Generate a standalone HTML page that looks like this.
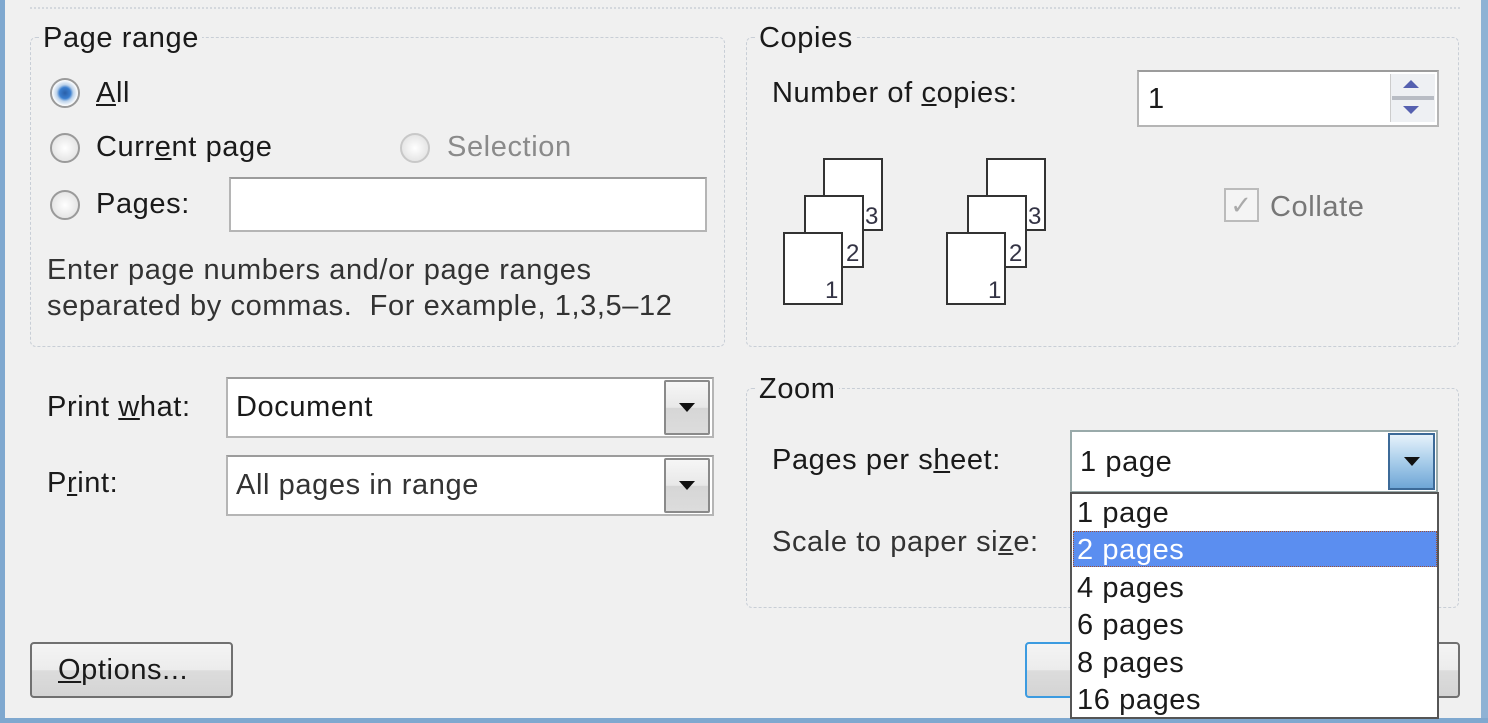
<!DOCTYPE html>
<html><head><style>
*{margin:0;padding:0;box-sizing:border-box}
body{width:1488px;height:723px;background:#f0f0f0;position:relative;overflow:hidden;font-family:"Liberation Sans",sans-serif;font-size:29px;letter-spacing:0.6px;color:#1a1a1a}
.a{position:absolute}
.t{position:absolute;line-height:30px;white-space:nowrap}
.grp{position:absolute;border:1px dashed #c8ced6;border-radius:6px}
.leg{position:absolute;background:#f0f0f0;padding:0 3px;line-height:30px}
.radio{position:absolute;width:30px;height:30px;border-radius:50%;border:2px solid #9a9a9a;background:radial-gradient(circle at 50% 50%,#fff 0,#e6e6e6 70%)}
.box{position:absolute;background:#fff;border:2px solid #b5b5b5;border-top-color:#9c9c9c}
.btn{position:absolute;width:46px;background:linear-gradient(#f6f6f6 0,#e8e8e8 50%,#d6d6d6 51%,#dcdcdc);border:2px solid #8a8a8a;border-radius:2px}
.tri{position:absolute;left:50%;top:50%;margin:-5px 0 0 -8px;border-left:8px solid transparent;border-right:8px solid transparent;border-top:9px solid #111}
.pg{position:absolute;width:60px;height:73px;background:#fff;border:2px solid #333}
.pg span{position:absolute;right:2px;bottom:0;font-size:24px;line-height:24px;color:#334}
.u{text-decoration:underline}
</style></head><body>
<div class="a" style="left:0;top:0;width:5px;height:723px;background:#7fa8cf"></div>
<div class="a" style="right:0;top:0;width:7px;height:723px;background:#8fb2d4"></div>
<div class="a" style="left:0;bottom:0;width:1488px;height:5px;background:#7fa8cf"></div>
<div class="a" style="left:30px;top:7px;width:1430px;border-top:2px dotted #d4d8dd"></div>

<div class="grp" style="left:30px;top:37px;width:695px;height:310px"></div>
<div class="leg" style="left:40px;top:23px">Page range</div>
<div class="radio" style="left:50px;top:78px;background:radial-gradient(circle,#2a5fa8 0,#3b7fd0 30%,#bcd2ea 45%,#fff 70%,#e6e6e6 100%)"></div>
<div class="t" style="left:96px;top:78px"><span class="u">A</span>ll</div>
<div class="radio" style="left:50px;top:133px"></div>
<div class="t" style="left:96px;top:132px">Curr<span class="u">e</span>nt page</div>
<div class="radio" style="left:400px;top:133px;border-color:#c8c8c8"></div>
<div class="t" style="left:447px;top:132px;color:#8a8a8a">Selection</div>
<div class="radio" style="left:50px;top:190px"></div>
<div class="t" style="left:96px;top:189px">Pa<span class="u">g</span>es:</div>
<div class="box" style="left:229px;top:177px;width:478px;height:55px"></div>
<div class="t" style="left:47px;top:255px;color:#333">Enter page numbers and/or page ranges</div>
<div class="t" style="left:47px;top:291px;color:#333">separated by commas.&nbsp; For example, 1,3,5–12</div>

<div class="grp" style="left:746px;top:37px;width:713px;height:310px"></div>
<div class="leg" style="left:756px;top:23px">Copies</div>
<div class="t" style="left:772px;top:78px">Number of <span class="u">c</span>opies:</div>
<div class="box" style="left:1137px;top:70px;width:302px;height:57px"></div>
<div class="t" style="left:1148px;top:84px">1</div>
<div class="a" style="left:1390px;top:74px;width:45px;height:48px;background:#eef0f3;border-left:1px solid #ccc"></div>
<div class="a" style="left:1403px;top:80px;border-left:8px solid transparent;border-right:8px solid transparent;border-bottom:8px solid #5560b0"></div>
<div class="a" style="left:1392px;top:96px;width:42px;height:4px;background:#b8bcc4"></div>
<div class="a" style="left:1403px;top:106px;border-left:8px solid transparent;border-right:8px solid transparent;border-top:8px solid #5560b0"></div>
<div class="pg" style="left:823px;top:158px"><span>3</span></div>
<div class="pg" style="left:804px;top:195px"><span>2</span></div>
<div class="pg" style="left:783px;top:232px"><span>1</span></div>
<div class="pg" style="left:986px;top:158px"><span>3</span></div>
<div class="pg" style="left:967px;top:195px"><span>2</span></div>
<div class="pg" style="left:946px;top:232px"><span>1</span></div>
<div class="a" style="left:1224px;top:188px;width:35px;height:34px;border:2px solid #bbb;background:#f4f4f4;color:#aaa;font-size:26px;line-height:30px;text-align:center">✓</div>
<div class="t" style="left:1270px;top:192px;color:#777">Collate</div>

<div class="t" style="left:47px;top:392px">Print <span class="u">w</span>hat:</div>
<div class="box" style="left:226px;top:377px;width:488px;height:61px"></div>
<div class="t" style="left:236px;top:392px">Document</div>
<div class="btn" style="left:664px;top:380px;height:55px"><div class="tri"></div></div>
<div class="t" style="left:47px;top:468px">P<span class="u">r</span>int:</div>
<div class="box" style="left:226px;top:455px;width:488px;height:61px"></div>
<div class="t" style="left:236px;top:470px;color:#333">All pages in range</div>
<div class="btn" style="left:664px;top:458px;height:55px"><div class="tri"></div></div>

<div class="grp" style="left:746px;top:388px;width:713px;height:220px"></div>
<div class="leg" style="left:756px;top:374px">Zoom</div>
<div class="t" style="left:772px;top:445px">Pages per s<span class="u">h</span>eet:</div>
<div class="t" style="left:772px;top:527px;color:#333">Scale to paper si<span class="u">z</span>e:</div>

<div class="a" style="left:30px;top:642px;width:203px;height:56px;border:2px solid #707070;border-radius:4px;background:linear-gradient(#f4f4f4 0,#ececec 50%,#dcdcdc 51%,#d4d4d4)"></div>
<div class="t" style="left:58px;top:655px"><span class="u">O</span>ptions...</div>
<div class="a" style="left:1025px;top:642px;width:100px;height:56px;border:2px solid #3c9be0;border-radius:4px;background:linear-gradient(#f4f4f4 0,#ececec 50%,#dcdcdc 51%,#d4d4d4)"></div>
<div class="a" style="left:1400px;top:642px;width:60px;height:56px;border:2px solid #707070;border-radius:4px;background:linear-gradient(#f4f4f4 0,#ececec 50%,#dcdcdc 51%,#d4d4d4)"></div>

<div class="box" style="left:1070px;top:430px;width:368px;height:63px;border-color:#9aa"></div>
<div class="t" style="left:1080px;top:447px">1 page</div>
<div class="a" style="left:1388px;top:433px;width:47px;height:57px;background:linear-gradient(#e6f2fb,#a8cdea 50%,#6fa6d6);border:2px solid #3c6a98"><div class="tri"></div></div>
<div class="a" style="left:1070px;top:492px;width:369px;height:227px;background:#fff;border:2px solid #555"></div>
<div class="a" style="left:1073px;top:531px;width:364px;height:36px;background:#5b8ef0;border:1px dotted #a05030"></div>
<div class="t" style="left:1077px;top:498px">1 page</div>
<div class="t" style="left:1077px;top:535px;color:#fff">2 pages</div>
<div class="t" style="left:1077px;top:573px">4 pages</div>
<div class="t" style="left:1077px;top:610px">6 pages</div>
<div class="t" style="left:1077px;top:648px">8 pages</div>
<div class="t" style="left:1077px;top:685px">16 pages</div>
</body></html>
